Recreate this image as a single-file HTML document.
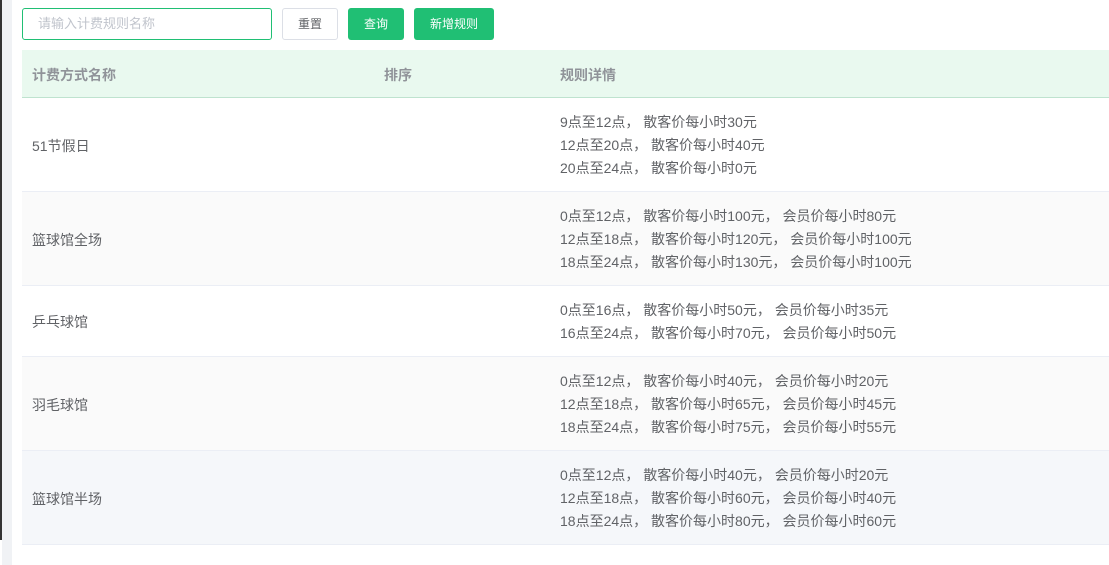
<!DOCTYPE html>
<html><head><meta charset="utf-8"><style>
*{margin:0;padding:0;box-sizing:border-box}
body{width:1109px;height:565px;overflow:hidden;background:#fff;font-family:"Liberation Sans","Noto Sans CJK SC",sans-serif;font-size:14px;color:#606266;position:relative}
.lb{position:absolute;left:0;top:0;width:2px;height:540px;background:#333}
.lg{position:absolute;left:2px;top:0;width:10px;height:565px;background:#f0f2f5}
.inp{position:absolute;left:22px;top:8px;width:250px;height:32px;border:1px solid #20bf74;border-radius:3px;color:#c0c4cc;padding-left:15px;line-height:30px;font-size:13px}
.btn{position:absolute;top:8px;height:32px;border-radius:3px;line-height:32px;text-align:center;font-size:12px}
.t{position:absolute;left:22px;top:50px;width:1087px}
.hd{height:48px;background:#e9f9ef;border-bottom:1px solid #bfe3cf;position:relative;font-weight:bold;color:#909399}
.r{position:relative;border-bottom:1px solid #ebeef5}
.c1,.c2,.c3{position:absolute}
.c1{left:10px}.c2{left:362px}.c3{left:538px}
.hd span{top:15px}
.l{line-height:23px}
</style></head><body>
<div class="lb"></div><div class="lg"></div>
<div class="inp">请输入计费规则名称</div>
<div class="btn" style="left:282px;width:56px;border:1px solid #dcdfe6;color:#606266;line-height:30px">重置</div>
<div class="btn" style="left:348px;width:56px;background:#20bf74;color:#fff">查询</div>
<div class="btn" style="left:414px;width:80px;background:#20bf74;color:#fff">新增规则</div>
<div class="t">
<div class="hd"><span class="c1">计费方式名称</span><span class="c2">排序</span><span class="c3">规则详情</span></div>
<div class="r" style="height:94px"><span class="c1" style="top:38px">51节假日</span><div class="c3 l" style="top:13px">9点至12点， 散客价每小时30元<br>12点至20点， 散客价每小时40元<br>20点至24点， 散客价每小时0元</div></div>
<div class="r" style="height:94px;background:#fafafa"><span class="c1" style="top:38px">篮球馆全场</span><div class="c3 l" style="top:13px">0点至12点， 散客价每小时100元， 会员价每小时80元<br>12点至18点， 散客价每小时120元， 会员价每小时100元<br>18点至24点， 散客价每小时130元， 会员价每小时100元</div></div>
<div class="r" style="height:71px"><span class="c1" style="top:26px">乒乓球馆</span><div class="c3 l" style="top:13px">0点至16点， 散客价每小时50元， 会员价每小时35元<br>16点至24点， 散客价每小时70元， 会员价每小时50元</div></div>
<div class="r" style="height:94px;background:#fafafa"><span class="c1" style="top:38px">羽毛球馆</span><div class="c3 l" style="top:13px">0点至12点， 散客价每小时40元， 会员价每小时20元<br>12点至18点， 散客价每小时65元， 会员价每小时45元<br>18点至24点， 散客价每小时75元， 会员价每小时55元</div></div>
<div class="r" style="height:94px;background:#f5f7fa"><span class="c1" style="top:38px">篮球馆半场</span><div class="c3 l" style="top:13px">0点至12点， 散客价每小时40元， 会员价每小时20元<br>12点至18点， 散客价每小时60元， 会员价每小时40元<br>18点至24点， 散客价每小时80元， 会员价每小时60元</div></div>
</div>
</body></html>
